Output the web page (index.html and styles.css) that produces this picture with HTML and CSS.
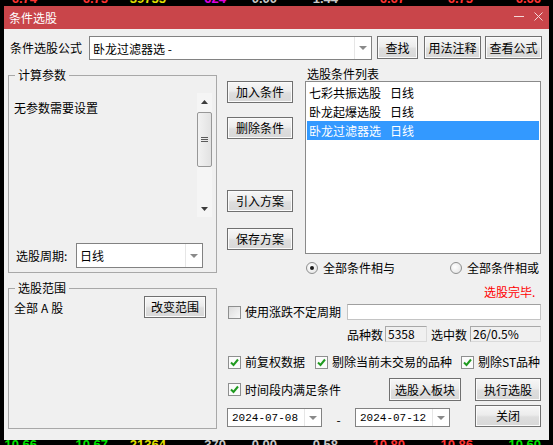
FILE: index.html
```html
<!DOCTYPE html>
<html lang="zh-CN">
<head>
  <meta charset="UTF-8">
  <title>条件选股</title>
  <link rel="stylesheet" href="styles.css">
</head>
<body>
  <!-- 行情背景 (上) -->
  <div class="ticker ticker-top">
    <span class="up">6.74</span><span class="up">6.75</span><span class="vol">39755</span><span class="cnt">624</span><span class="flat">0.00</span><span class="flat">1.44</span><span class="up">6.67</span><span class="up">6.75</span><span class="up">6.66</span>
  </div>

  <div class="dialog">
    <!-- Title bar -->
    <div class="titlebar">
      <span class="title">条件选股</span>
      <div class="win-ctrls">
        <svg class="win-min" width="10" height="10" viewBox="0 0 10 10"><line x1="0" y1="3.5" x2="10" y2="3.5" stroke="#f4d8d8" stroke-width="1"/></svg>
        <svg class="win-close" width="9" height="9" viewBox="0 0 9 9"><path d="M0.5 0.5 L8.5 8.5 M8.5 0.5 L0.5 8.5" stroke="#f4d8d8" stroke-width="1"/></svg>
      </div>
    </div>

    <div class="dlg-body">
      <!-- Formula row -->
      <div class="formula-row">
        <span class="formula-label">条件选股公式</span>
        <div class="combo formula-combo">
          <span class="combo-text">卧龙过滤器选 -</span>
          <span class="combo-arrow"></span>
        </div>
        <button class="btn btn-find">查找</button>
        <button class="btn btn-note">用法注释</button>
        <button class="btn btn-view">查看公式</button>
      </div>

      <div class="main">
        <!-- Left column -->
        <div class="left-col">
          <div class="group group-params">
            <div class="group-title">计算参数</div>
            <div class="params-area">
              <div class="params-text">无参数需要设置</div>
              <div class="scrollbar">
                <div class="sb-arrow">
                  <svg width="7" height="4" viewBox="0 0 7 4"><path d="M0 4 L3.5 0 L7 4 Z" fill="#3c3c3c"/></svg>
                </div>
                <div class="sb-thumb">
                  <span class="grip"></span><span class="grip"></span><span class="grip"></span>
                </div>
                <div class="sb-arrow sb-arrow-down">
                  <svg width="7" height="4" viewBox="0 0 7 4"><path d="M0 0 L7 0 L3.5 4 Z" fill="#3c3c3c"/></svg>
                </div>
              </div>
            </div>
            <div class="period-row">
              <span class="period-label">选股周期:</span>
              <div class="combo period-combo">
                <span class="combo-text">日线</span>
                <span class="combo-arrow"></span>
              </div>
            </div>
          </div>

          <div class="group group-range">
            <div class="group-title">选股范围</div>
            <div class="range-row">
              <span class="range-text">全部<span class="range-a">A</span>股</span>
              <button class="btn btn-range">改变范围</button>
            </div>
          </div>
        </div>

        <!-- Right column -->
        <div class="right-col">
          <div class="upper">
            <div class="side-btns">
              <button class="btn side-btn">加入条件</button>
              <button class="btn side-btn btn-del">删除条件</button>
              <button class="btn side-btn btn-import">引入方案</button>
              <button class="btn side-btn btn-save">保存方案</button>
            </div>
            <div class="list-col">
              <div class="list-label">选股条件列表</div>
              <div class="listbox">
                <div class="list-item"><span>七彩共振选股</span><span class="cond-period">日线</span></div>
                <div class="list-item"><span>卧龙起爆选股</span><span class="cond-period">日线</span></div>
                <div class="list-item selected"><span>卧龙过滤器选</span><span class="cond-period">日线</span></div>
              </div>
            </div>
          </div>

          <div class="radio-row">
            <label class="radio-item"><span class="radio checked"></span><span class="radio-text">全部条件相与</span></label>
            <label class="radio-item"><span class="radio"></span><span class="radio-text">全部条件相或</span></label>
          </div>

          <div class="status">选股完毕.</div>

          <div class="row row-period">
            <span class="checkbox"></span>
            <span class="cb-text">使用涨跌不定周期</span>
            <div class="textbox"></div>
          </div>

          <div class="row row-counts">
            <span>品种数</span>
            <span class="readonly count-total">5358</span>
            <span class="count-sel-label">选中数</span>
            <span class="readonly count-sel">26/0.5%</span>
          </div>

          <div class="row row-checks">
            <span class="checkbox checked"><svg width="11" height="11" viewBox="0 0 11 11"><path d="M2 5.5 L4.5 8 L9 2.5" fill="none" stroke="#1f9a1f" stroke-width="2"/></svg></span>
            <span class="cb-text">前复权数据</span>
            <span class="checkbox checked cb-second"><svg width="11" height="11" viewBox="0 0 11 11"><path d="M2 5.5 L4.5 8 L9 2.5" fill="none" stroke="#1f9a1f" stroke-width="2"/></svg></span>
            <span class="cb-text">剔除当前未交易的品种</span>
            <span class="checkbox checked cb-third"><svg width="11" height="11" viewBox="0 0 11 11"><path d="M2 5.5 L4.5 8 L9 2.5" fill="none" stroke="#1f9a1f" stroke-width="2"/></svg></span>
            <span class="cb-text">剔除ST品种</span>
          </div>

          <div class="row row-actions">
            <span class="checkbox checked"><svg width="11" height="11" viewBox="0 0 11 11"><path d="M2 5.5 L4.5 8 L9 2.5" fill="none" stroke="#1f9a1f" stroke-width="2"/></svg></span>
            <span class="cb-text">时间段内满足条件</span>
            <button class="btn btn-block">选股入板块</button>
            <button class="btn btn-run">执行选股</button>
          </div>

          <div class="row row-dates">
            <div class="combo date-combo">
              <span class="combo-text date-text">2024-07-08</span>
              <span class="combo-arrow"></span>
            </div>
            <span class="date-sep">-</span>
            <div class="combo date-combo">
              <span class="combo-text date-text">2024-07-12</span>
              <span class="combo-arrow"></span>
            </div>
            <button class="btn btn-close">关闭</button>
          </div>
        </div>
      </div>
    </div>
  </div>

  <!-- 行情背景 (下) -->
  <div class="ticker ticker-bottom">
    <span class="down">10.66</span><span class="down">10.67</span><span class="vol">21364</span><span class="flat">370</span><span class="flat">0.00</span><span class="flat">0.58</span><span class="up">10.80</span><span class="up">10.86</span><span class="down">10.60</span>
  </div>
</body>
</html>
```

FILE: styles.css
```css
* {
  box-sizing: border-box;
}

body {
  margin: 0;
  width: 553px;
  height: 445px;
  overflow: hidden;
  background-color: #000;
  font-family: "Noto Sans CJK SC", sans-serif;
  font-size: 12px;
  color: #000;
}

/* background quote rows */
.ticker {
  display: grid;
  grid-template-columns: 37px 71px 58px 60px 51px 61px 67px 68px 68px;
  overflow: hidden;
  font: bold 13px/14px "Liberation Sans", sans-serif;
}

.ticker span {
  text-align: right;
}

.ticker-top {
  height: 6px;
}

.ticker-top span {
  margin-top: -8px;
}

.ticker-bottom {
  height: 5px;
}

.ticker-bottom span {
  margin-top: -2px;
}

.up { color: #ff3333; }
.down { color: #00e600; }
.vol { color: #e0e000; }
.cnt { color: #e000e0; }
.flat { color: #c8c8c8; }

/* dialog */
.dialog {
  margin-left: 4px;
  width: 545px;
  height: 434px;
  background-color: #f0f0f0;
}

.titlebar {
  height: 23px;
  background-color: #c9454a;
  color: #fff;
  display: flex;
  align-items: center;
  padding: 0 6px 0 5px;
}

.title {
  line-height: 14px;
}

.win-ctrls {
  margin-left: auto;
  display: flex;
  align-items: center;
  gap: 10px;
}

.win-close {
  margin-top: -3px;
}

.dlg-body {
  height: 411px;
  padding: 7px 0 0 4px;
}

/* common controls */
.btn {
  font-family: inherit;
  font-size: 12px;
  line-height: 14px;
  color: #000;
  padding: 0;
  border: 1px solid #707070;
  border-radius: 0;
  background: linear-gradient(#f7f7f7, #ececec 45%, #dedede 55%, #d8d8d8);
  box-shadow: inset 0 0 0 1px #fbfbfb;
}

.combo {
  display: flex;
  background-color: #fff;
  border: 1px solid #828282;
}

.combo-text {
  flex: 1;
  padding-left: 3px;
  display: flex;
  align-items: center;
  white-space: nowrap;
}

.combo-arrow {
  width: 17px;
  border-left: 1px solid #e6e6e6;
  display: flex;
  align-items: center;
  justify-content: center;
}

.combo-arrow::after {
  content: "";
  border-left: 4px solid transparent;
  border-right: 4px solid transparent;
  border-top: 4px solid #8a8a8a;
}

/* formula row */
.formula-row {
  display: flex;
  align-items: flex-start;
  height: 24px;
  padding-left: 2px;
}

.formula-label {
  width: 79px;
  line-height: 24px;
}

.formula-combo {
  width: 283px;
  height: 24px;
}

.btn-find {
  margin-left: 5px;
  width: 41px;
  height: 23px;
}

.btn-note {
  margin-left: 6px;
  width: 57px;
  height: 23px;
}

.btn-view {
  margin-left: 4px;
  width: 57px;
  height: 23px;
}

/* main area */
.main {
  display: flex;
  margin-top: 6px;
}

.left-col {
  width: 209px;
  padding-top: 9px;
}

.group {
  border: 1px solid #a8a8a8;
}

.group-title {
  width: fit-content;
  margin: -8px 0 0 6px;
  padding: 0 3px;
  line-height: 14px;
  background-color: #f0f0f0;
}

.group-params {
  height: 198px;
}

.params-area {
  display: flex;
  height: 124px;
  margin-top: 11px;
}

.params-text {
  flex: 1;
  padding: 8px 0 0 5px;
  line-height: 14px;
}

.scrollbar {
  width: 15px;
  margin-right: 4px;
  background-color: #f5f5f5;
  display: flex;
  flex-direction: column;
}

.sb-arrow {
  height: 17px;
  display: flex;
  align-items: center;
  justify-content: center;
}

.sb-arrow-down {
  margin-top: auto;
}

.sb-thumb {
  height: 55px;
  margin-top: 2px;
  border: 1px solid #979797;
  border-radius: 2px;
  background: linear-gradient(to right, #f2f2f2, #e2e2e2);
  display: flex;
  flex-direction: column;
  align-items: center;
  justify-content: center;
  gap: 1px;
}

.grip {
  width: 7px;
  height: 1px;
  background-color: #5a5a5a;
}

.period-row {
  display: flex;
  align-items: center;
  height: 25px;
  margin-top: 26px;
}

.period-label {
  width: 60px;
  margin-left: 7px;
}

.period-combo {
  width: 127px;
  height: 25px;
}

.group-range {
  height: 141px;
  margin-top: 15px;
}

.range-row {
  display: flex;
  align-items: center;
  height: 22px;
  margin-top: 1px;
}

.range-text {
  padding-left: 5px;
}

.range-a {
  margin: 0 3px;
}

.btn-range {
  margin-left: auto;
  margin-right: 10px;
  width: 62px;
  height: 22px;
}

/* right column */
.right-col {
  width: 314px;
  margin-left: 10px;
}

.upper {
  display: flex;
  height: 188px;
}

.side-btns {
  width: 66px;
  padding-top: 15px;
  display: flex;
  flex-direction: column;
}

.side-btn {
  height: 22px;
}

.btn-del {
  margin-top: 14px;
}

.btn-import {
  margin-top: 51px;
}

.btn-save {
  margin-top: 16px;
}

.list-col {
  width: 236px;
  margin-left: 12px;
}

.list-label {
  line-height: 15px;
  padding-left: 2px;
}

.listbox {
  height: 173px;
  background-color: #fff;
  border: 1px solid #8a8a8a;
  padding: 1px;
}

.list-item {
  height: 19px;
  line-height: 19px;
  padding-left: 2px;
  display: flex;
}

.list-item.selected {
  background-color: #3399ff;
  color: #fff;
}

.cond-period {
  margin-left: 9px;
}

.radio-row {
  display: grid;
  grid-template-columns: 144px 1fr;
  height: 14px;
  margin: 7px 0 0 78px;
}

.radio-item {
  display: flex;
  align-items: center;
}

.radio {
  width: 12px;
  height: 12px;
  margin-left: 1px;
  border: 1px solid #8e8f8f;
  border-radius: 50%;
  background: radial-gradient(circle at 40% 40%, #fff, #e0e0e0);
  display: flex;
  align-items: center;
  justify-content: center;
}

.radio.checked::after {
  content: "";
  width: 4px;
  height: 4px;
  border-radius: 50%;
  background-color: #1a1a1a;
}

.radio-text {
  margin-left: 5px;
  line-height: 14px;
}

.status {
  margin-top: 10px;
  padding-left: 257px;
  line-height: 14px;
  color: #ff0000;
}

.row {
  display: flex;
  align-items: center;
}

.checkbox {
  width: 13px;
  height: 13px;
  margin-left: 1px;
  border: 1px solid #8e8f8f;
  background: linear-gradient(135deg, #dcdcdc, #f8f8f8);
  display: flex;
  align-items: center;
  justify-content: center;
}

.checkbox.checked {
  background: #fbfbfb;
}

.cb-text {
  margin-left: 4px;
  line-height: 14px;
  white-space: nowrap;
}

.row-period {
  height: 16px;
  margin-top: 5px;
}

.textbox {
  width: 194px;
  height: 16px;
  margin-left: auto;
  background-color: #fff;
  border: 1px solid #c4c4c4;
  border-top-color: #a0a0a0;
}

.row-counts {
  height: 16px;
  margin-top: 6px;
  padding-left: 120px;
}

.readonly {
  height: 16px;
  line-height: 14px;
  padding-left: 2px;
  border: 1px solid #dadada;
  border-top-color: #a8a8a8;
  border-left-color: #a8a8a8;
}

.count-total {
  width: 42px;
  margin-left: 2px;
}

.count-sel-label {
  margin-left: 4px;
}

.count-sel {
  width: 71px;
  margin-left: 3px;
}

.row-checks {
  height: 14px;
  margin-top: 13px;
}

.cb-second {
  margin-left: 10px;
}

.cb-third {
  margin-left: 9px;
}

.row-actions {
  height: 23px;
  margin-top: 9px;
}

.btn-block {
  width: 72px;
  height: 23px;
  margin-left: 48px;
}

.btn-run {
  width: 66px;
  height: 23px;
  margin-left: 14px;
}

.row-dates {
  height: 22px;
  margin-top: 4px;
  align-items: flex-end;
}

.date-combo {
  width: 95px;
  height: 19px;
}

.date-text {
  font-family: "Liberation Mono", monospace;
  font-size: 11px;
  padding-left: 4px;
}

.date-sep {
  width: 33px;
  text-align: center;
  line-height: 14px;
}

.btn-close {
  width: 66px;
  height: 22px;
  margin-left: 25px;
}
```
